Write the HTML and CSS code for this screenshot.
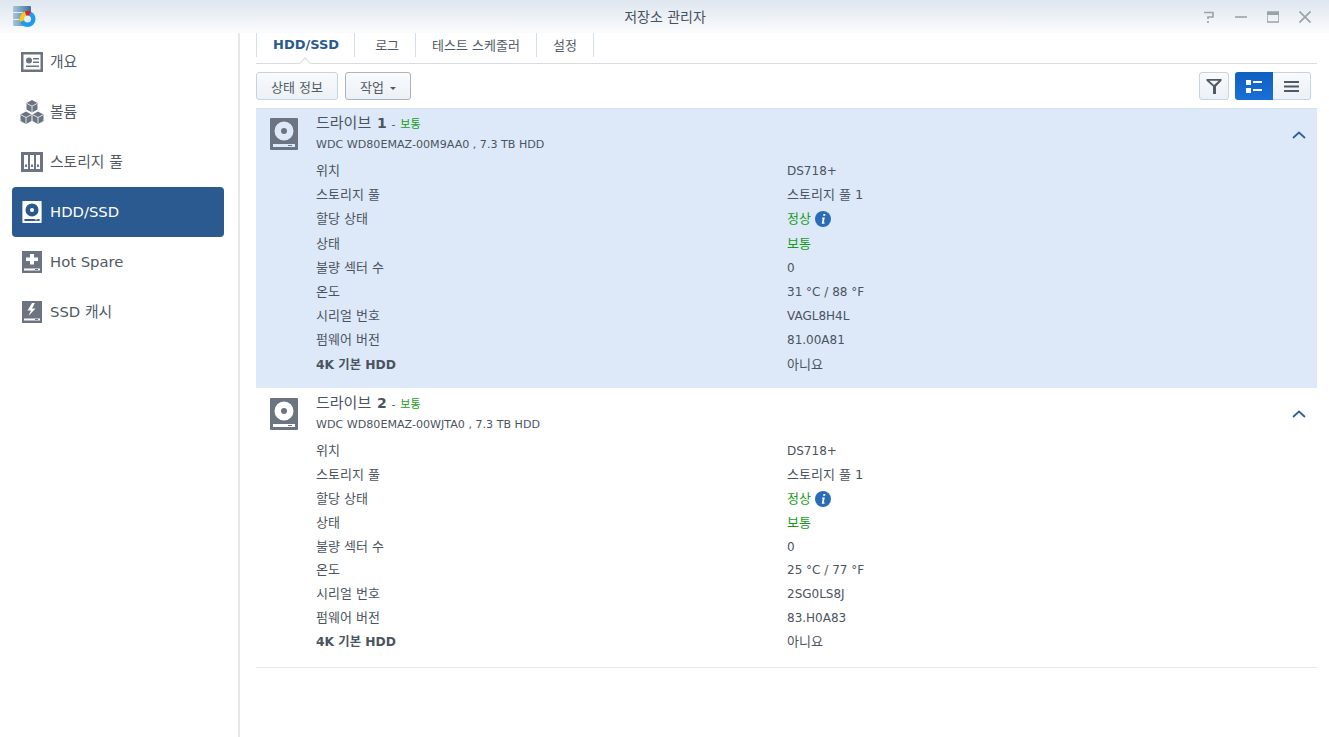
FILE: index.html
```html
<!DOCTYPE html>
<html lang="ko">
<head>
<meta charset="utf-8">
<title>저장소 관리자</title>
<link rel="stylesheet" href="styles.css">
</head>
<body>
<svg class="defs" width="0" height="0">
  <symbol id="disk" viewBox="0 0 28 32">
    <path fill-rule="evenodd" d="M1 0h26a1 1 0 0 1 1 1v30a1 1 0 0 1-1 1H1a1 1 0 0 1-1-1V1a1 1 0 0 1 1-1zM14 3.500a9.500 9.500 0 1 0 0 19a9.500 9.500 0 0 0 0-19zM14 10a3 3 0 1 1 0 6a3 3 0 0 1 0-6zM3 26v3h22v-3zM18 27h4v1h-4z"/>
  </symbol>
</svg>

<div class="titlebar">
  <div class="title-left">
    <svg class="app-icon" width="23" height="21" viewBox="0 0 23 21">
      <defs>
        <linearGradient id="can" x1="0" x2="1" y1="0" y2="0">
          <stop offset="0" stop-color="#a9c6da"/>
          <stop offset=".5" stop-color="#6f9dbd"/>
          <stop offset="1" stop-color="#3f6f96"/>
        </linearGradient>
      </defs>
      <rect x="0" y="0" width="18" height="20" rx="1" fill="url(#can)"/>
      <path d="M0 6.500h18M0 13.500h18" stroke="#e6eef4" stroke-width="1"/>
      <circle cx="14.500" cy="13" r="8" fill="#1c9bf0"/>
      <path d="M7 16a8 8 0 0 1 5-10.500l2.500 7.500z" fill="#f6c51f"/>
      <path d="M12 5.500a8 8 0 0 1 6-.2l-3.500 7.700z" fill="#e3202a"/>
      <circle cx="14.500" cy="13" r="3.500" fill="#e4edf4"/>
    </svg>
  </div>
  <div class="title">저장소 관리자</div>
  <div class="win-btns">
    <svg width="12" height="12" viewBox="0 0 12 12"><path d="M1 1.500h9v4.500H5v2M5 10v2" fill="none" stroke="#9aa2aa" stroke-width="1.600"/></svg>
    <svg width="12" height="12" viewBox="0 0 12 12"><path d="M0 6h12" stroke="#9aa2aa" stroke-width="1.600"/></svg>
    <svg width="12" height="12" viewBox="0 0 12 12"><path d="M0 1h12v10H0z" fill="none" stroke="#9aa2aa" stroke-width="1.500"/><path d="M0 2.500h12" stroke="#9aa2aa" stroke-width="3"/></svg>
    <svg width="12" height="12" viewBox="0 0 12 12"><path d="M.5.500l11 11M11.500.500l-11 11" stroke="#9aa2aa" stroke-width="1.700"/></svg>
  </div>
</div>

<div class="app">
  <div class="sidebar">
    <div class="nav-item">
      <svg class="nav-icon" width="22" height="20" viewBox="0 0 22 20"><path fill-rule="evenodd" d="M0 0h22v20H0zM2.500 2.500v15h17v-15zM12 6h6v1.500h-6zM12 9.500h6V11h-6zM5 13.500h13V15H5z"/><circle cx="8" cy="8.500" r="3"/></svg>
      <span>개요</span>
    </div>
    <div class="nav-item">
      <svg class="nav-icon" width="22" height="24" viewBox="1 0 22 24"><path d="M12 0l5.500 3v6.500L12 12.500 6.500 9.500V3zM6 11.500l5.500 3V21L6 24 .5 21v-6.500zM18 11.500l5.500 3V21L18 24l-5.500-3v-6.500z"/><path d="M7 3.500l5 2.700 5-2.700M12 6.200v6M1 14.800l5 2.700 5-2.700M6 17.500v6M13 14.800l5 2.700 5-2.700M18 17.500v6" fill="none" stroke="#fff" stroke-width=".8"/></svg>
      <span>볼륨</span>
    </div>
    <div class="nav-item">
      <svg class="nav-icon" width="22" height="20" viewBox="0 0 22 20"><path fill-rule="evenodd" d="M0 0h22v20H0zM3 3v14h4V3zM9 3v14h4V3zM15 3v14h4V3z"/><path d="M4 12.500h2v2.500H4zM10 12.500h2v2.500h-2zM16 12.500h2v2.500h-2z"/></svg>
      <span>스토리지 풀</span>
    </div>
    <div class="nav-item active">
      <svg class="nav-icon" width="20" height="22"><use href="#disk"/></svg>
      <span class="latin">HDD/SSD</span>
    </div>
    <div class="nav-item">
      <svg class="nav-icon" width="20" height="22" viewBox="0 0 20 22"><path fill-rule="evenodd" d="M0 0h20v22H0zM8 3v3.500H4V10h4v3.500h4V10h4V6.500h-4V3zM2 17.500v2h16v-2zM13 18h3v1h-3z"/></svg>
      <span class="latin">Hot Spare</span>
    </div>
    <div class="nav-item">
      <svg class="nav-icon" width="20" height="22" viewBox="0 0 20 22"><path fill-rule="evenodd" d="M0 0h20v22H0zM10 2L5.500 9.500H9L6.500 15l7-7.500H10L13 2zM2 17.500v2h16v-2zM13 18h3v1h-3z"/></svg>
      <span>SSD 캐시</span>
    </div>
  </div>

  <div class="main">
    <div class="tabs">
      <div class="tab current">HDD/SSD</div>
      <div class="tab log">로그</div>
      <div class="tab">테스트 스케줄러</div>
      <div class="tab">설정</div>
    </div>

    <div class="toolbar">
      <button class="btn btn-info">상태 정보</button>
      <button class="btn btn-action">작업 <i class="caret"></i></button>
      <div class="toolbar-right">
        <button class="btn icon-btn">
          <svg width="16" height="16" viewBox="0 0 16 16"><path d="M.5 1h15v1.800L10 8.500V16H7V8.500L.5 2.800zM3.300 2.800L8 7l4.700-4.200z" fill="#4f5a66" fill-rule="evenodd"/></svg>
        </button>
        <div class="view-switch">
          <div class="view-opt on">
            <svg width="16" height="13" viewBox="0 0 16 13"><path d="M0 0h5v5H0zM0 8h5v5H0zM7 1h9v2H7zM7 9h9v2H7z" fill="#fff"/></svg>
          </div>
          <div class="view-opt">
            <svg width="15" height="11" viewBox="0 0 15 11"><path d="M0 0h15v2H0zM0 4.500h15v2H0zM0 9h15v2H0z" fill="#4f5a66"/></svg>
          </div>
        </div>
      </div>
    </div>

    <div class="drive selected">
      <div class="drive-head">
        <svg class="drive-icon" width="28" height="32"><use href="#disk"/></svg>
        <div>
          <div class="drive-name">드라이브 <b>1</b> <span class="dash">-</span> <span class="ok">보통</span></div>
          <div class="drive-model">WDC WD80EMAZ-00M9AA0 , 7.3 TB HDD</div>
        </div>
        <svg class="chevron" width="14" height="8" viewBox="0 0 14 8"><path d="M1 7l6-5.500L13 7" fill="none" stroke="#2f5f93" stroke-width="1.800"/></svg>
      </div>
      <div class="props">
        <div class="prop"><span class="ko">위치</span><span>DS718+</span></div>
        <div class="prop"><span class="ko">스토리지 풀</span><span class="ko">스토리지 풀 1</span></div>
        <div class="prop"><span class="ko">할당 상태</span><span class="ko ok">정상 <svg class="info" width="16" height="16" viewBox="0 0 16 16"><circle cx="8" cy="8" r="8" fill="#2a6cb5"/><path d="M8.500 3h2l-.4 1.800h-2zM7.300 6.500h2.500L8.700 11.500h1l-.3 1.300H6.700l1-5h-.7z" fill="#fff"/></svg></span></div>
        <div class="prop"><span class="ko">상태</span><span class="ko ok">보통</span></div>
        <div class="prop"><span class="ko">불량 섹터 수</span><span>0</span></div>
        <div class="prop"><span class="ko">온도</span><span>31 °C / 88 °F</span></div>
        <div class="prop"><span class="ko">시리얼 번호</span><span>VAGL8H4L</span></div>
        <div class="prop"><span class="ko">펌웨어 버전</span><span>81.00A81</span></div>
        <div class="prop"><span class="strong">4K 기본 HDD</span><span class="ko">아니요</span></div>
      </div>
    </div>

    <div class="drive">
      <div class="drive-head">
        <svg class="drive-icon" width="28" height="32"><use href="#disk"/></svg>
        <div>
          <div class="drive-name">드라이브 <b>2</b> <span class="dash">-</span> <span class="ok">보통</span></div>
          <div class="drive-model">WDC WD80EMAZ-00WJTA0 , 7.3 TB HDD</div>
        </div>
        <svg class="chevron" width="14" height="8" viewBox="0 0 14 8"><path d="M1 7l6-5.500L13 7" fill="none" stroke="#2f5f93" stroke-width="1.800"/></svg>
      </div>
      <div class="props">
        <div class="prop"><span class="ko">위치</span><span>DS718+</span></div>
        <div class="prop"><span class="ko">스토리지 풀</span><span class="ko">스토리지 풀 1</span></div>
        <div class="prop"><span class="ko">할당 상태</span><span class="ko ok">정상 <svg class="info" width="16" height="16" viewBox="0 0 16 16"><circle cx="8" cy="8" r="8" fill="#2a6cb5"/><path d="M8.500 3h2l-.4 1.800h-2zM7.300 6.500h2.500L8.700 11.500h1l-.3 1.300H6.700l1-5h-.7z" fill="#fff"/></svg></span></div>
        <div class="prop"><span class="ko">상태</span><span class="ko ok">보통</span></div>
        <div class="prop"><span class="ko">불량 섹터 수</span><span>0</span></div>
        <div class="prop"><span class="ko">온도</span><span>25 °C / 77 °F</span></div>
        <div class="prop"><span class="ko">시리얼 번호</span><span>2SG0LS8J</span></div>
        <div class="prop"><span class="ko">펌웨어 버전</span><span>83.H0A83</span></div>
        <div class="prop"><span class="strong">4K 기본 HDD</span><span class="ko">아니요</span></div>
      </div>
    </div>
  </div>
</div>
</body>
</html>
```

FILE: styles.css
```css
/* Storage manager window */

html, body
{ height: 100%;
}

body
{ margin: 0;
  overflow: hidden;
  background: #fff;
  color: #4a545e;
  font-family: "DejaVu Sans", "Noto Sans CJK KR", sans-serif;
  font-size: 12px;
  display: flex;
  flex-direction: column;
}

.defs
{ position: absolute;
}

/* Title bar */

.titlebar
{ height: 33px;
  flex: none;
  display: grid;
  grid-template-columns: 1fr auto 1fr;
  align-items: center;
  padding: 0 18px 2px 13px;
  box-sizing: border-box;
  background: linear-gradient(#dfe6ef, #fbfcfd);
}

.app-icon
{ display: block;
  margin-top: 1px;
}

.title
{ font-size: 14px;
  color: #47525e;
  margin-left: 6px;
}

.win-btns
{ display: flex;
  justify-content: flex-end;
  gap: 20px;
  margin-top: 2px;
}

.app
{ flex: 1;
  display: flex;
  min-height: 0;
}

/* Sidebar */

.sidebar
{ width: 240px;
  flex: none;
  box-sizing: border-box;
  padding: 4px 14px 0 12px;
  border-right: 2px solid #e6e8ea;
}

.nav-item
{ height: 50px;
  display: flex;
  align-items: center;
  border-radius: 4px;
  font-size: 14.800px;
  color: #505a64;
  padding-left: 9px;
}

.nav-item span
{ margin-bottom: 3px;
}

.nav-item span.latin
{ margin-bottom: 1px;
}

.nav-icon
{ width: 22px;
  margin-right: 7px;
  fill: #6b7480;
  flex: none;
  overflow: visible;
}

.nav-item.active
{ background: #2a5a8f;
  color: #fff;
}

.nav-item.active .nav-icon
{ fill: #fff;
}

/* Main panel */

.main
{ flex: 1;
  min-width: 0;
  padding: 0 12px 0 16px;
  display: flex;
  flex-direction: column;
}

.tabs
{ display: flex;
  flex: none;
  height: 24px;
  padding-bottom: 6px;
  border-bottom: 1px solid #d8dce0;
}

.tab
{ padding: 0 16px 2px 16px;
  display: flex;
  align-items: center;
  border-right: 1px solid #d3dee8;
  font-size: 13px;
  color: #505a64;
}

.tab.log
{ padding-left: 20px;
}

.tab.current
{ border-left: 1px solid #d3dee8;
  font-weight: bold;
  font-size: 13px;
  color: #2a5a8f;
  padding-right: 15px;
  position: relative;
}

.tab.current::after
{ content: "";
  position: absolute;
  left: 44px;
  bottom: -10px;
  width: 7px;
  height: 7px;
  background: #fff;
  border-left: 1px solid #d8dce0;
  border-top: 1px solid #d8dce0;
  transform: rotate(45deg);
}

.toolbar
{ display: flex;
  flex: none;
  gap: 7px;
  padding: 8px 0;
}

.btn
{ height: 28px;
  box-sizing: border-box;
  border: 1px solid #c6d3e0;
  border-radius: 3px;
  background: linear-gradient(#f8fafc, #ecf1f6);
  color: #505a64;
  font: inherit;
  font-size: 13px;
  padding: 0;
}

.btn-info
{ width: 82px;
}

.btn-action
{ width: 66px;
  border-color: #aab4bf;
}

.caret
{ display: inline-block;
  margin-left: 2px;
  vertical-align: 2px;
  border: 3px solid transparent;
  border-top: 3px solid #505a64;
  border-bottom: 0;
}

.toolbar-right
{ margin-left: auto;
  display: flex;
  gap: 6px;
  margin-right: 6px;
}

.icon-btn
{ width: 30px;
  display: flex;
  align-items: center;
  justify-content: center;
}

.view-switch
{ display: flex;
  height: 28px;
}

.view-opt
{ width: 38px;
  display: flex;
  align-items: center;
  justify-content: center;
  box-sizing: border-box;
  background: linear-gradient(#f8fafc, #ecf1f6);
  border: 1px solid #c6d3e0;
  border-left: 0;
  border-radius: 0 3px 3px 0;
}

.view-opt.on
{ background: linear-gradient(#0f5fc0, #1a6fd6);
  border: 0;
  border-radius: 3px 0 0 3px;
}

/* Drive rows */

.drive
{ height: 280px;
  box-sizing: border-box;
  flex: none;
  padding-left: 14px;
  border-bottom: 1px solid #e6e8ea;
}

.drive.selected
{ background: #dde9f9;
  border-top: 1px solid #d3e0ee;
  border-bottom: 0;
}

.drive-head
{ display: flex;
  align-items: flex-start;
  height: 50px;
  padding-top: 5px;
  box-sizing: border-box;
  position: relative;
}

.drive:not(.selected) .drive-head
{ padding-top: 6px;
  margin-bottom: 1px;
}

.drive-icon
{ fill: #6b7480;
  margin: 4px 18px 0 0;
  flex: none;
}

.drive-name
{ font-size: 15px;
  line-height: 19px;
}

.drive-name b
{ font-size: 14px;
  margin-left: 1px;
}

.drive-name .dash, .drive-name .ok
{ font-size: 11px;
}

.drive-model
{ font-size: 11.100px;
  line-height: 20px;
  margin-top: 1px;
}

.chevron
{ position: absolute;
  right: 11px;
  top: 22px;
}

.props
{ margin-left: 46px;
}

.prop
{ display: grid;
  grid-template-columns: 471px 1fr;
  height: 24.200px;
  line-height: 24px;
  align-items: center;
}

.drive:not(.selected) .prop
{ height: 23.900px;
}

.prop .ko
{ font-size: 13px;
}

.prop .strong
{ font-weight: bold;
  font-size: 12.300px;
}

.ok
{ color: #179b17;
}

.info
{ vertical-align: -4px;
}
```
